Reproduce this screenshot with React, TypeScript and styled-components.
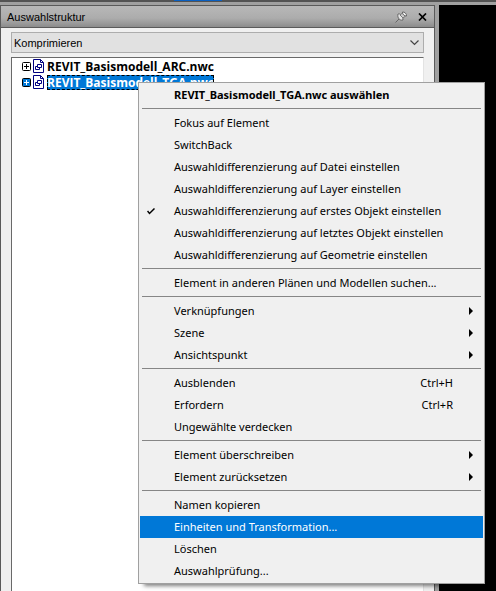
import React from "react";
import styled, { createGlobalStyle, css } from "styled-components";

const GlobalStyle = createGlobalStyle`
  * { box-sizing: border-box; }
  body {
    margin: 0;
    background: #000;
    color: #000;
    font: 11px/16px "Noto Sans", "Open Sans", sans-serif;
  }
  button, select {
    font: inherit;
    color: inherit;
    margin: 0;
    padding: 0;
    border: 0;
    background: none;
    text-align: left;
  }
`;

const Window = styled.div`
  position: relative;
  display: flex;
  flex-direction: column;
  min-height: 100vh;
`;

const Ribbon = styled.div`
  display: flex;
  height: 2px;
  padding-left: 174px;
  background: #535353;
`;

const RibbonTab = styled.div`
  width: 48px;
  height: 1px;
  background: #0a5fc0;
`;

const Frame = styled.div`
  height: 3px;
  background: #a0a0a0;
`;

const Workspace = styled.main`
  flex: 1;
  display: flex;
  align-items: stretch;
`;

const Panel = styled.section`
  flex: 0 1 435px;
  display: flex;
  flex-direction: column;
  border: 1px solid #5a5a5a;
  border-bottom: 0;
  background: #f0f0f0;
`;

const Splitter = styled.div`
  width: 4px;
  background: #a0a0a0;
`;

const Canvas = styled.div`
  flex: 1;
  background: #000;
`;

const TitleBar = styled.header`
  display: flex;
  align-items: center;
  gap: 10px;
  height: 22px;
  padding: 0 6px;
  border-bottom: 1px solid #5a5a5a;
  background: linear-gradient(#b8b8b8, #acacac 58%, #8c8c8c);
`;

const Title = styled.h1`
  flex: 1;
  margin: 0;
  font: 11px/16px "Liberation Sans", sans-serif;
`;

const TitleButton = styled.button`
  display: flex;
`;

const PanelBody = styled.div`
  flex: 1;
  display: flex;
  flex-direction: column;
  gap: 4px;
  padding: 4px 10px 0;
`;

const ComboBox = styled.div`
  display: grid;
  align-items: center;
  height: 21px;
  border: 1px solid #adadad;
  background: #e1e1e1;
  > * { grid-area: 1 / 1; }
  > svg { justify-self: end; margin-right: 4px; pointer-events: none; }
`;

const Select = styled.select`
  width: 100%;
  padding: 0 2px;
  appearance: none;
  font: 11px/16px "Liberation Sans", sans-serif;
`;

const Tree = styled.div`
  flex: 1;
  border: 1px solid #e3e3e3;
  border-top-color: #696969;
  border-left-color: #696969;
  border-bottom: 0;
  background: #fff;
`;

const TreeRow = styled.div`
  display: flex;
  align-items: center;
  gap: 2px;
  height: 16px;
  padding-left: 10px;
`;

const TreeLabel = styled.button<{ $selected?: boolean }>`
  height: 15px;
  margin-left: 1px;
  font: 700 12px/15px "Open Sans", sans-serif;
  white-space: nowrap;
  ${(p) => p.$selected && css`
    background: #0078d7;
    color: #fff;
    outline: 1px dashed #000;
    outline-offset: -1px;
  `}
`;

const Menu = styled.div`
  position: absolute;
  top: 82px;
  left: 138px;
  width: 347px;
  padding: 1px;
  border: 1px solid #a0a0a0;
  background: #f0f0f0;
  box-shadow: 4px 4px 4px -2px rgba(0, 0, 0, 0.5);
`;

const MenuItem = styled.button<{ $bold?: boolean; $active?: boolean }>`
  display: grid;
  grid-template-columns: 34px 1fr auto 30px;
  align-items: center;
  width: 100%;
  height: 22px;
  white-space: nowrap;
  font-weight: ${(p) => (p.$bold ? 700 : 400)};
  background: ${(p) => (p.$active ? "#0078d7" : "transparent")};
  color: ${(p) => (p.$active ? "#fff" : "#000")};
`;

const Mark = styled.span`
  display: flex;
  padding-left: 7px;
`;

const Arrow = styled.span`
  display: flex;
  justify-content: flex-end;
  padding-right: 10px;
`;

const Separator = styled.hr`
  height: 1px;
  margin: 2px 2px 3px;
  border: 0;
  background: #868686;
`;

const Expander = ({ selected }: { selected?: boolean }) => (
  <svg width="9" height="9" viewBox="0 0 9 9" aria-hidden="true">
    <rect x="0.5" y="0.5" width="8" height="8" rx="1" fill={selected ? "#0078d7" : "#fff"} stroke="#000" />
    <path d="M2 4.5h5M4.5 2v5" stroke={selected ? "#fff" : "#000"} />
  </svg>
);

const FileIcon = () => (
  <svg width="11" height="14" viewBox="0 0 11 14" fill="none" stroke="#000080" aria-hidden="true">
    <path d="M.5.5h7l3 3v10H.5z" fill="#fff" />
    <path d="M7.5.5v3h3" />
    <path d="M4.500 5.500h4v3h-4z" />
    <path d="M4.500 7.500h-2v3h4v-2" />
  </svg>
);

type Entry = {
  label: string;
  shortcut?: string;
  submenu?: boolean;
  checked?: boolean;
  bold?: boolean;
  active?: boolean;
};

const groups: Entry[][] = [
  [{ label: "REVIT_Basismodell_TGA.nwc auswählen", bold: true }],
  [
    { label: "Fokus auf Element" },
    { label: "SwitchBack" },
    { label: "Auswahldifferenzierung auf Datei einstellen" },
    { label: "Auswahldifferenzierung auf Layer einstellen" },
    { label: "Auswahldifferenzierung auf erstes Objekt einstellen", checked: true },
    { label: "Auswahldifferenzierung auf letztes Objekt einstellen" },
    { label: "Auswahldifferenzierung auf Geometrie einstellen" },
  ],
  [{ label: "Element in anderen Plänen und Modellen suchen..." }],
  [
    { label: "Verknüpfungen", submenu: true },
    { label: "Szene", submenu: true },
    { label: "Ansichtspunkt", submenu: true },
  ],
  [
    { label: "Ausblenden", shortcut: "Ctrl+H" },
    { label: "Erfordern", shortcut: "Ctrl+R" },
    { label: "Ungewählte verdecken" },
  ],
  [
    { label: "Element überschreiben", submenu: true },
    { label: "Element zurücksetzen", submenu: true },
  ],
  [
    { label: "Namen kopieren" },
    { label: "Einheiten und Transformation...", active: true },
    { label: "Löschen" },
    { label: "Auswahlprüfung..." },
  ],
];

export default function App() {
  return (
    <Window>
      <GlobalStyle />
      <Ribbon><RibbonTab /></Ribbon>
      <Frame />
      <Workspace>
        <Panel>
          <TitleBar>
            <Title>Auswahlstruktur</Title>
            <TitleButton aria-label="Automatisch ausblenden">
              <svg width="13" height="12" viewBox="0 0 13 12" fill="none" aria-hidden="true">
                <path d="M.5 11.5l4-4" stroke="#666" />
                <path d="M3 3c2-1 5 2 5 6-3 1-6-2-5-6z" fill="#e4e4e4" stroke="#666" />
                <path d="M5 4l2.500-2 3 3L8 7z" fill="#ccc" stroke="#777" />
                <path d="M7.500 1c2-.5 4.500 2 4 4-2 .5-4.500-2-4-4z" fill="#f0f0f0" stroke="#666" />
              </svg>
            </TitleButton>
            <TitleButton aria-label="Schließen">
              <svg width="10" height="8" viewBox="0 0 10 8" stroke="#000" strokeWidth="1.7" aria-hidden="true">
                <path d="M1 .5l7 7M8 .5l-7 7" />
              </svg>
            </TitleButton>
          </TitleBar>
          <PanelBody>
            <ComboBox>
              <Select aria-label="Sortierung" defaultValue="k">
                <option value="k">Komprimieren</option>
              </Select>
              <svg width="9" height="6" viewBox="0 0 9 6" fill="none" stroke="#444" strokeWidth="1.2" aria-hidden="true">
                <path d="M.5.5l4 4 4-4" />
              </svg>
            </ComboBox>
            <Tree role="tree" aria-label="Auswahlstruktur">
              <TreeRow role="treeitem">
                <Expander /><FileIcon />
                <TreeLabel>REVIT_Basismodell_ARC.nwc</TreeLabel>
              </TreeRow>
              <TreeRow role="treeitem" aria-selected="true">
                <Expander selected /><FileIcon />
                <TreeLabel $selected>REVIT_Basismodell_TGA.nwc</TreeLabel>
              </TreeRow>
            </Tree>
          </PanelBody>
        </Panel>
        <Splitter />
        <Canvas />
      </Workspace>
      <Menu role="menu">
        {groups.map((group, i) => (
          <React.Fragment key={i}>
            {i > 0 && <Separator />}
            {group.map((e) => (
              <MenuItem
                key={e.label}
                role={e.checked ? "menuitemcheckbox" : "menuitem"}
                aria-checked={e.checked}
                $bold={e.bold}
                $active={e.active}
              >
                <Mark>
                  {e.checked && (
                    <svg width="8" height="7" viewBox="0 0 8 7" fill="none" stroke="#000" strokeWidth="1.5" aria-hidden="true">
                      <path d="M.5 3l2 2.500 5-5" />
                    </svg>
                  )}
                </Mark>
                <span>{e.label}</span>
                <span>{e.shortcut}</span>
                <Arrow>
                  {e.submenu && (
                    <svg width="4" height="8" viewBox="0 0 4 8" aria-hidden="true">
                      <path d="M0 0l4 4-4 4z" />
                    </svg>
                  )}
                </Arrow>
              </MenuItem>
            ))}
          </React.Fragment>
        ))}
      </Menu>
    </Window>
  );
}
